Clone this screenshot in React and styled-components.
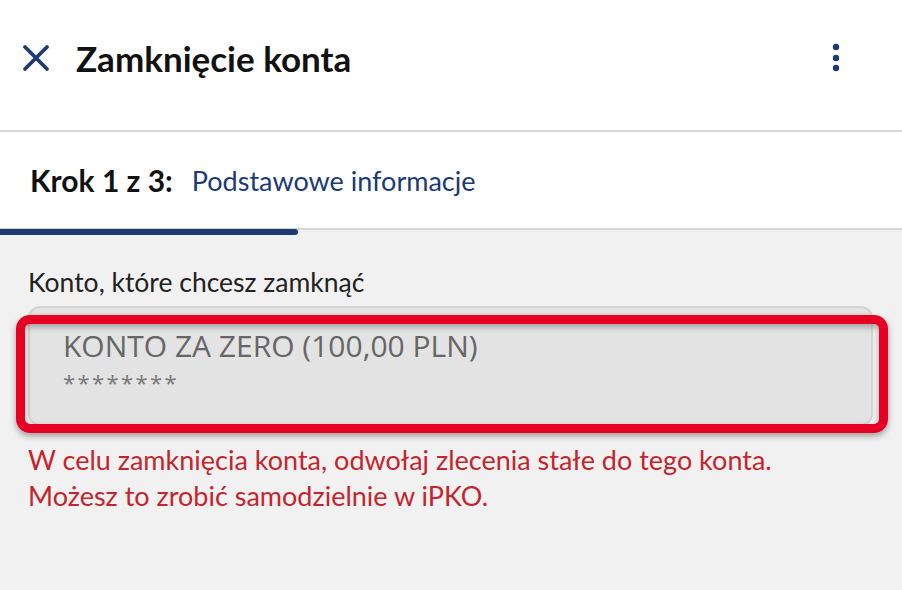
import styled, { createGlobalStyle } from 'styled-components';

const GlobalStyle = createGlobalStyle`
  html, body {
    margin: 0;
    padding: 0;
    background: #f1f1f1;
  }
  body {
    font-family: Lato, "Open Sans", sans-serif;
  }
`;

const Page = styled.div`
  width: 902px;
  height: 590px;
  background: #f1f1f1;
  overflow: hidden;
`;

const Header = styled.header`
  height: 132px;
  background: #fff;
  border-bottom: 2px solid #d9d9d9;
  display: flex;
  align-items: center;
  padding: 0 22px 14px;
  box-sizing: border-box;
`;

const IconButton = styled.button`
  border: none;
  background: none;
  padding: 0;
  display: flex;
  align-items: center;
  justify-content: center;
  width: ${p => p.$w || 28}px;
  height: 30px;
  cursor: pointer;
`;

const Title = styled.h1`
  margin: 0 0 0 26px;
  flex: 1;
  font-family: Lato, sans-serif;
  font-weight: 700;
  font-size: 35px;
  color: #111;
`;

const StepBar = styled.div`
  position: relative;
  height: 96px;
  background: #fff;
  border-bottom: 2px solid #d6d6d6;
  display: flex;
  align-items: center;
  padding: 0 30px;
  gap: 19px;
`;

const StepCount = styled.span`
  font-weight: 700;
  font-size: 30px;
  color: #111;
`;

const StepName = styled.span`
  font-size: 27px;
  color: #1c3a78;
`;

const Progress = styled.div`
  position: absolute;
  left: 0;
  bottom: -7px;
  height: 6px;
  border-radius: 0 3px 3px 0;
  background: #1d3a72;
`;

const Content = styled.section`
  padding: 36px 28px 0;
`;

const Label = styled.div`
  font-size: 26.5px;
  color: #222;
`;

const FieldWrap = styled.div`
  position: relative;
  margin-top: 8px;
  margin-right: 1px;
`;

const AccountField = styled.div`
  height: 120px;
  box-sizing: border-box;
  background: #e3e3e3;
  border: 2px solid #d4d4d4;
  border-radius: 12px;
  padding: 19px 33px 0;
`;

const AccountName = styled.div`
  font-family: "Open Sans", sans-serif;
  font-size: 30px;
  color: #666;
  line-height: 38px;
`;

const AccountNumber = styled.div`
  font-family: "Open Sans", sans-serif;
  font-size: 22px;
  color: #777;
  letter-spacing: 2.4px;
  margin-top: 2px;
`;

const Highlight = styled.div`
  position: absolute;
  left: -12px;
  right: -15px;
  top: 9px;
  bottom: -7px;
  border: 9px solid #e60023;
  border-radius: 14px;
  box-shadow: 0 3px 6px rgba(0, 0, 0, 0.35), inset 0 3px 6px rgba(0, 0, 0, 0.3);
  pointer-events: none;
`;

const Warning = styled.p`
  margin: 16px 0 0;
  font-size: 27px;
  line-height: 36px;
  color: #c4252d;
`;

function CloseIcon() {
  return (
    <svg width="28" height="28" viewBox="0 0 28 28">
      <path d="M3 3 L25 25 M25 3 L3 25" stroke="#1d3a72" strokeWidth="3.8" strokeLinecap="round" />
    </svg>
  );
}

function MoreIcon() {
  return (
    <svg width="8" height="30" viewBox="0 0 8 30">
      <circle cx="4" cy="4" r="3.2" fill="#1d3a72" />
      <circle cx="4" cy="15" r="3.2" fill="#1d3a72" />
      <circle cx="4" cy="25" r="3.2" fill="#1d3a72" />
    </svg>
  );
}

export default function App() {
  const step = 1;
  const steps = 3;
  return (
    <Page>
      <GlobalStyle />
      <Header>
        <IconButton>
          <CloseIcon />
        </IconButton>
        <Title>Zamknięcie konta</Title>
        <IconButton $w={8} style={{ marginRight: 40 }}>
          <MoreIcon />
        </IconButton>
      </Header>
      <StepBar>
        <StepCount>Krok {step} z {steps}:</StepCount>
        <StepName>Podstawowe informacje</StepName>
        <Progress style={{ width: `${(step / steps) * 100 - 0.3}%` }} />
      </StepBar>
      <Content>
        <Label>Konto, które chcesz zamknąć</Label>
        <FieldWrap>
          <AccountField>
            <AccountName>KONTO ZA ZERO (100,00 PLN)</AccountName>
            <AccountNumber>********</AccountNumber>
          </AccountField>
          <Highlight />
        </FieldWrap>
        <Warning>
          W celu zamknięcia konta, odwołaj zlecenia stałe do tego konta.
          <br />
          Możesz to zrobić samodzielnie w iPKO.
        </Warning>
      </Content>
    </Page>
  );
}
